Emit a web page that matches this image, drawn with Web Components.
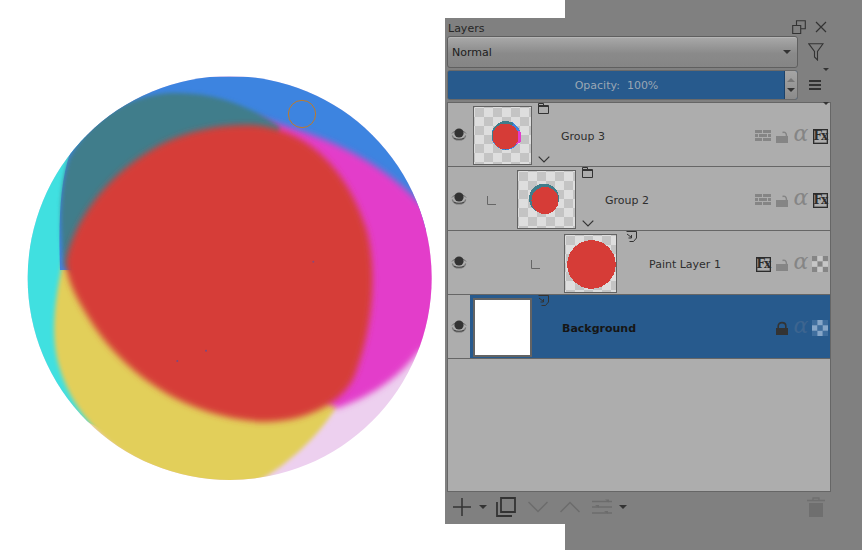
<!DOCTYPE html>
<html><head><meta charset="utf-8"><title>Layers</title>
<style>
html,body{margin:0;height:100%;background:#fff;overflow:hidden}
body{font:11px "DejaVu Sans",sans-serif;color:#222}
</style></head><body>
<k-desktop>
  <k-canvas slot="canvas"></k-canvas>
  <k-docker slot="docker" title="Layers">
    <k-layer-row name="Group 3" depth="0" kind="group" thumb="g3" props="brick lock alpha fx"></k-layer-row>
    <k-layer-row name="Group 2" depth="1" kind="group" thumb="g2" props="brick lock alpha fx"></k-layer-row>
    <k-layer-row name="Paint Layer 1" depth="2" kind="paint" thumb="p1" props="fx lock alpha check"></k-layer-row>
    <k-layer-row name="Background" depth="0" kind="paint" thumb="bg" selected props="none lockdark alpha check"></k-layer-row>
  </k-docker>
</k-desktop>
<script>
const ICONS={
 eye:'<svg viewBox="0 0 16 16" width="16" height="16"><path d="M1 6.5C3.5 2.5 12.5 2.5 15 6.5" fill="none" stroke="#6a6a6a" stroke-width="1"/><circle cx="8" cy="6" r="4.6" fill="#333"/><path d="M1.3 8.5C3 14.5 13 14.5 14.7 8.5" fill="none" stroke="#777" stroke-width="1.2"/><path d="M3 11.2C5.5 12.6 10.5 12.6 13 11.2" fill="none" stroke="#444" stroke-width="1"/></svg>',
 group:'<svg viewBox="0 0 11 11" width="11" height="11"><path d="M.5 2.5h10v8H.5zM.5 .5h5v2h-5zM.5 3.5h10" fill="none" stroke="#333"/></svg>',
 paint:'<svg viewBox="0 0 11 11" width="11" height="11"><path d="M.5 .5H10.5V7L7.5 10.5H3.5M1 3l4.5 3.5M5.5 4v3h-3" fill="none" stroke="#333"/></svg>',
 chevron:'<svg viewBox="0 0 12 7" width="12" height="7"><path d="M.7.7 6 6 11.300.7" fill="none" stroke="#333" stroke-width="1.200"/></svg>',
 elbow:'<svg viewBox="0 0 9 9" width="9" height="9"><path d="M.5 0V8.500H9" fill="none" stroke="#666"/></svg>',
 brick:'<svg viewBox="0 0 16 16" width="16" height="16"><path fill="#858585" d="M0 2h7v3H0zM8 2h8v3H8zM0 6h3v3H0zM4 6h8v3H4zM13 6h3v3h-3zM0 10h7v3H0zM8 10h8v3H8z"/></svg>',
 lock:'<svg viewBox="0 0 16 16" width="16" height="16"><path fill="#858585" d="M2 8h12v7H2z"/><path d="M8.500 4.500C11 3.500 12.500 5 12.500 8" fill="none" stroke="#858585" stroke-width="1.500"/></svg>',
 lockdark:'<svg viewBox="0 0 16 16" width="16" height="16"><path fill="#333" d="M2 8h12v7H2z"/><path d="M4.200 8V6C4.200 1.500 11.800 1.500 11.800 6V8" fill="none" stroke="#333" stroke-width="1.600"/></svg>',
 check:'<svg viewBox="0 0 15 15" width="16" height="16"><path fill="#858585" d="M0 0h5v5H0zM10 0h5v5h-5zM5 5h5v5H5zM0 10h5v5H0zM10 10h5v5h-5z"/><path fill="#c6c6c6" d="M5 0h5v5H5zM0 5h5v5H0zM10 5h5v5h-5zM5 10h5v5H5z"/></svg>',
 checksel:'<svg viewBox="0 0 15 15" width="16" height="16"><path fill="#3f6e9e" d="M0 0h5v5H0zM10 0h5v5h-5zM5 5h5v5H5zM0 10h5v5H0zM10 10h5v5h-5z"/><path fill="#86a6c8" d="M5 0h5v5H5zM0 5h5v5H0zM10 5h5v5h-5zM5 10h5v5H5z"/></svg>',
 float:'<svg viewBox="0 0 14 14" width="14" height="14"><path d="M.7 5.500h8v8h-8zM4.500 5.500V.7h8.800v8H8.700" fill="none" stroke="#333" stroke-width="1.100"/></svg>',
 close:'<svg viewBox="0 0 12 12" width="12" height="12"><path d="M1 1 11 11M11 1 1 11" stroke="#333" stroke-width="1.200"/></svg>',
 filter:'<svg viewBox="0 0 16 18" width="16" height="18"><path d="M.7.7H15L9.500 8.500V17L6.500 14V8.500Z" fill="none" stroke="#333" stroke-width="1.100"/></svg>',
 menu:'<svg viewBox="0 0 12 10" width="12" height="10"><path d="M0 1h12M0 5h12M0 9h12" stroke="#333" stroke-width="2"/></svg>',
 caret:'<svg viewBox="0 0 8 4" width="8" height="4"><path d="M0 0h8L4 4Z" fill="#333"/></svg>',
 caretsm:'<svg viewBox="0 0 6 3" width="6" height="3"><path d="M0 0h6L3 3Z" fill="#333"/></svg>',
 plus:'<svg viewBox="0 0 18 18" width="18" height="18"><path d="M9 0V18M0 9H18" stroke="#333" stroke-width="1.500"/></svg>',
 dup:'<svg viewBox="0 0 20 20" width="20" height="20"><path d="M5 1h14v14H5z" fill="none" stroke="#333" stroke-width="1.800"/><path d="M1 5V19H16" fill="none" stroke="#333" stroke-width="1.800"/></svg>',
 down:'<svg viewBox="0 0 20 12" width="20" height="12"><path d="M.5 1 10 10.500 19.500 1" fill="none" stroke="#6c6c6c" stroke-width="1.500"/></svg>',
 up:'<svg viewBox="0 0 20 12" width="20" height="12"><path d="M.5 11 10 1.500 19.500 11" fill="none" stroke="#6c6c6c" stroke-width="1.500"/></svg>',
 props:'<svg viewBox="0 0 20 16" width="20" height="16"><g stroke="#6c6c6c" stroke-width="1.500"><path d="M0 2.500H20M0 8H20M0 14H20"/><path d="M13 .5h4v3M3 6h4v3M12 12h4v3" fill="#6c6c6c" stroke="none"/></g></svg>',
 trash:'<svg viewBox="0 0 18 20" width="18" height="20"><path d="M2 6h14v14H2z" fill="#6f6f6f"/><path d="M0 3.500H18" stroke="#6f6f6f" stroke-width="1.500"/><path d="M6 3V1h6v2" fill="none" stroke="#6f6f6f" stroke-width="1.300"/></svg>'
};
function def(tag,html,extra){
  customElements.define(tag,class extends HTMLElement{
    constructor(){super();this.attachShadow({mode:'open'}).innerHTML=typeof html==='function'?html(this):html;}
    connectedCallback(){extra&&extra(this);}
  });
}
def('k-icon','<style>:host{display:inline-flex;line-height:0}</style><span></span>',el=>{
  el.shadowRoot.querySelector('span').innerHTML=ICONS[el.getAttribute('name')]||'';
});

def('k-desktop',`<style>
:host{display:grid;grid-template-columns:565px 1fr;width:862px;height:550px;position:relative;background:#fff}
.l{background:#fff;display:flex;padding:70px 0 0 20px;box-sizing:border-box}
.r{background:#808080}
.win{position:absolute;left:445px;top:18px;width:417px;height:506px}
</style><div class="l"><slot name="canvas"></slot></div><div class="r"></div><div class="win"><slot name="docker"></slot></div>`);

def('k-canvas',`<style>:host{display:block;width:420px;height:420px}svg{display:block}</style>
<svg viewBox="0 0 1260 1260" width="420" height="420">
<defs>
<clipPath id="c"><circle cx="629" cy="624" r="606"/></clipPath>
<filter id="b1" x="-20%" y="-20%" width="140%" height="140%"><feGaussianBlur stdDeviation="9"/></filter>
<filter id="b2" x="-20%" y="-20%" width="140%" height="140%"><feGaussianBlur stdDeviation="6"/></filter>
</defs>
<g clip-path="url(#c)">
<rect width="1260" height="1260" fill="#edd0ef"/>
<path d="M-20 200H300L500 1200 170 1040 -20 900Z" fill="#40e0e0"/>
<path d="M132 560C105 680 92 780 112 870C135 960 180 1040 260 1110C380 1210 520 1250 690 1250C790 1190 880 1120 950 1010L700 500Z" fill="#e2cf5a" filter="url(#b2)"/>
<path d="M120 600C115 450 120 340 150 250L250 20H1300V460L800 600Z" fill="#3d84e0"/>
<path d="M700 140C850 180 1050 240 1200 400L1300 410V800L1195 845C1130 930 1050 980 950 1015L600 800Z" fill="#e33dca" filter="url(#b1)"/>
<path d="M132 590C118 470 118 340 150 260C200 170 290 85 440 70C560 62 680 100 780 170L700 420L220 640Z" fill="#3f7d8b" filter="url(#b2)"/>
<path d="M680 165C850 165 980 290 1040 480C1072 600 1060 760 1010 900C980 1000 850 1060 720 1055C500 1040 330 920 230 780C170 690 138 630 138 570C170 430 280 300 420 225C510 180 600 165 680 165Z" fill="#d63c37" filter="url(#b1)"/>
<circle cx="880" cy="575" r="3" fill="#8a4a78"/><circle cx="558" cy="842" r="3" fill="#7a4a80"/><circle cx="472" cy="873" r="3" fill="#7a4a80"/>
<circle cx="846" cy="132" r="41" fill="none" stroke="#c07a28" stroke-width="3"/>
</g></svg>`);

def('k-combo',`<style>
:host{display:flex;align-items:center;box-sizing:border-box;width:351px;height:32px;border:1px solid #5f5f5f;border-radius:3px;
background:linear-gradient(#a9a9a9,#8a8a8a 55%,#858585);padding:0 6px 0 4px;box-shadow:inset 0 1px 0 #b5b5b5}
span{flex:1;font:11px "DejaVu Sans",sans-serif;color:#1c1c1c}
</style><span><slot></slot></span><k-icon name="caret"></k-icon>`);

def('k-opacity',`<style>
:host{display:flex;box-sizing:border-box;width:351px;height:30px;border:1px solid #6a6a6a;border-radius:3px;overflow:hidden;background:#275a8d}
.v{flex:1;display:flex;align-items:center;justify-content:center;font:11px "DejaVu Sans",sans-serif;color:#9aa7b4;white-space:pre;background:#275a8d;padding-left:1px}
.s{width:13px;border-left:1px solid #1c426a;display:flex;flex-direction:column;align-items:center;justify-content:space-around;padding:4px 0;box-sizing:border-box;background:linear-gradient(#a5a5a5,#8b8b8b)}
.u{width:0;height:0;border:4px solid transparent;border-top:0;border-bottom:4px solid #777}
.d{width:0;height:0;border:4px solid transparent;border-bottom:0;border-top:4px solid #333}
</style><div class="v"><slot></slot></div><div class="s"><i class="u"></i><i class="d"></i></div>`);

def('k-thumb',el=>{
  const t=el.getAttribute('kind');
  const art={
   g3:`<svg viewBox="0 0 59 59" width="59" height="59"><g shape-rendering="crispEdges"><circle cx="33" cy="29.500" r="14.500" fill="#3d84e0"/><path d="M19 30A14 14 0 0 1 40 17L33 44 19 34Z" fill="#3f7d8b"/><path d="M34 20 48 26V36L36 42Z" fill="#e33dca"/><circle cx="32.500" cy="30.500" r="13" fill="#d63c37"/></g></svg>`,
   g2:`<svg viewBox="0 0 59 59" width="59" height="59"><g shape-rendering="crispEdges"><circle cx="27" cy="28.500" r="15" fill="#3f7d8b"/><circle cx="28" cy="30.500" r="13.500" fill="#d63c37"/></g></svg>`,
   p1:`<svg viewBox="0 0 53 59" width="53" height="59"><circle cx="27.500" cy="30.500" r="24.300" fill="#d63c37" shape-rendering="crispEdges"/></svg>`,
   bg:''
  }[t];
  const w=t==='p1'?53:59;
  const bg=t==='bg'?'#fff':'repeating-conic-gradient(#dedede 0 25%,#c4c4c4 0 50%) 1px 1px/18px 18px';
  return `<style>:host{display:flex;justify-content:center;width:59px;height:59px;flex:none}
  .f{box-sizing:border-box;width:${w}px;height:59px;border:${t==='bg'?2:1}px solid #636363;background:${bg};overflow:hidden}
  svg{display:block;margin:-1px}</style><div class="f">${art}</div>`;
});

def('k-prop',el=>{
  const n=el.getAttribute('name'),sel=el.hasAttribute('sel');
  let inner;
  if(n==='alpha') inner=`<span class="a" style="color:${sel?'#3d6590':'#858585'}">α</span>`;
  else if(n==='fx') inner=`<span class="fx">Fx</span>`;
  else if(n==='none') inner='';
  else inner=`<k-icon name="${n==='check'&&sel?'checksel':n}"></k-icon>`;
  return `<style>:host{display:flex;width:16px;height:16px;align-items:center;justify-content:center;flex:none}
  .a{font:italic 22px/16px "DejaVu Serif",serif;position:relative;top:-2px}
  .fx{box-sizing:border-box;width:15px;height:15px;border:1px solid #2c2c2c;font:bold 12px/13px "DejaVu Serif",serif;color:#2c2c2c;text-align:center;letter-spacing:-1px;box-shadow:inset 0 0 0 .5px #555}
  </style>${inner}`;
});

def('k-layer-row',el=>{
  const d=+el.getAttribute('depth'),kind=el.getAttribute('kind'),sel=el.hasAttribute('selected');
  const props=el.getAttribute('props').split(' ').map(p=>`<k-prop name="${p}"${sel?' sel':''}></k-prop>`).join('');
  return `<style>
  :host{display:flex;height:64px;box-sizing:border-box;border-bottom:1px solid #666;background:#adadad}
  .eye{width:22px;flex:none;display:flex;align-items:center;justify-content:center;padding-top:0}
  .m{flex:1;display:flex;align-items:flex-start;padding:3px 2px 0 3px;min-width:0;${sel?'background:#275a8d;':''}}
  .ind{width:${44*d}px;flex:none;position:relative;height:59px;display:flex;align-items:center;justify-content:flex-end}
  .ind k-icon{margin-right:${21}px;margin-top:1px}
  .tcol{width:12px;height:59px;margin-left:5px;flex:none;display:flex;flex-direction:column;justify-content:space-between;padding-bottom:2px;box-sizing:border-box;margin-top:-3px;height:62px}
  .tcol k-icon{margin-left:1px}
  .l{width:12px;flex:none}
  .name{margin-left:12px;flex:1;align-self:center;font:${sel?'bold ':''}11px "DejaVu Sans",sans-serif;color:${sel?'#161616':'#2e2e2e'};white-space:nowrap;${sel?'padding-left:1px;':''}}
  .p{display:flex;gap:3px;align-self:center;margin-left:auto}
  </style>
  <div class="eye"><k-icon name="eye"></k-icon></div>
  <div class="m">
    ${d?`<div class="ind"><k-icon name="elbow"></k-icon></div>`:''}
    <k-thumb kind="${el.getAttribute('thumb')}"></k-thumb>
    <div class="tcol"><k-icon name="${kind}"></k-icon>${kind==='group'?'<k-icon name="chevron"></k-icon>':''}</div>
    <div class="name">${el.getAttribute('name')}</div>
    <div class="p">${props}</div>
  </div>`;
});

def('k-docker',el=>`<style>
:host{display:flex;flex-direction:column;width:417px;height:506px;box-sizing:border-box;background:#808080;padding-left:2px;font:11px "DejaVu Sans",sans-serif}
.t{height:18px;display:flex;align-items:center;padding:0 35px 0 1px;color:#262626;margin-top:0}
.t b{font-weight:normal;flex:1;position:relative;top:1px}
.t k-icon+k-icon{margin-left:9px}
.row{display:flex;align-items:flex-start;margin-bottom:2px}
.tool{width:33px;position:relative;height:30px}
.tool .big{position:absolute;left:10px;top:7px}
.tool .sm{position:absolute;left:25px;top:25px}
.tool.f .big{top:7px}
.list{box-sizing:border-box;width:384px;height:390px;border:1px solid #666;background:#adadad;flex:none}
.bar{flex:1;display:flex;align-items:center;padding:0 0 3px 6px}
.bar k-icon.c{margin-left:8px}
.bar .tr{margin-left:auto;margin-right:37px}
</style>
<div class="t"><b>${el.getAttribute('title')}</b><k-icon name="float"></k-icon><k-icon name="close"></k-icon></div>
<div class="row"><k-combo>Normal</k-combo><div class="tool f" style="height:32px"><span class="big"><k-icon name="filter"></k-icon></span><span class="sm"><k-icon name="caretsm"></k-icon></span></div></div>
<div class="row"><k-opacity>Opacity:  100%</k-opacity><div class="tool"><span class="big" style="left:11px;top:10px"><k-icon name="menu"></k-icon></span><span class="sm"><k-icon name="caretsm"></k-icon></span></div></div>
<div class="list"><slot></slot></div>
<div class="bar"><k-icon name="plus"></k-icon><k-icon class="c" name="caret"></k-icon><k-icon name="dup" style="margin-left:9px"></k-icon><k-icon name="down" style="margin-left:12px"></k-icon><k-icon name="up" style="margin-left:12px"></k-icon><k-icon name="props" style="margin-left:12px"></k-icon><k-icon class="c" name="caret" style="margin-left:7px"></k-icon><k-icon class="tr" name="trash"></k-icon></div>`);
</script>
</body></html>
